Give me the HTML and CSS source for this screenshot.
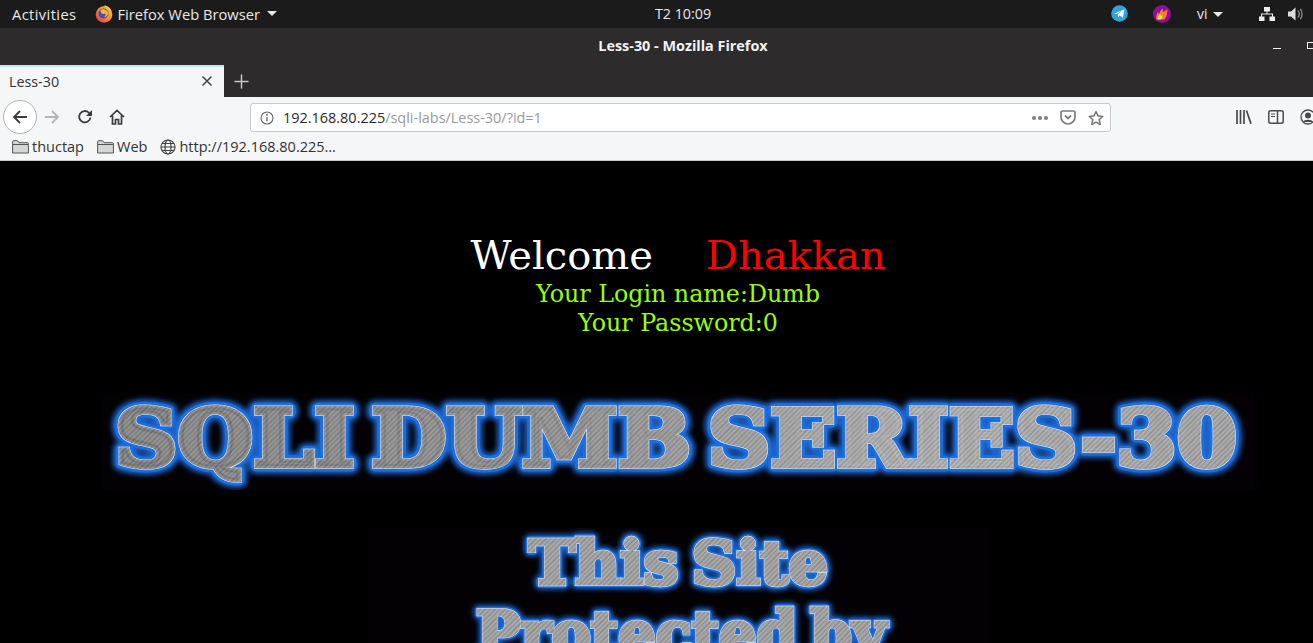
FILE: index.html
```html
<!DOCTYPE html>
<html lang="en">
<head>
    <meta charset="UTF-8">
    <title>Less-30 - Mozilla Firefox</title>
    <link rel="stylesheet" href="styles.css">
</head>
<body>
<div class="desktop">
    <!-- gnome top bar -->
    <div class="topbar">
        <div class="top-left">
            <span class="activities">Activities</span>
            <span class="app-menu">
                <svg class="fx-logo" width="18" height="18" viewBox="0 0 18 18">
                    <defs><linearGradient id="fx" x1="1" y1="0" x2="0" y2="1"><stop offset="0" stop-color="#ffdc2e"/><stop offset=".5" stop-color="#ff8a1c"/><stop offset="1" stop-color="#e0245e"/></linearGradient></defs>
                    <circle cx="9" cy="9.500" r="8.300" fill="url(#fx)"/>
                    <circle cx="8.500" cy="8.500" r="5" fill="#3b4fc4"/>
                    <path d="M5.500 5c3-1.800 7.500 0 7.500 3.500 0 2-1.800 3.600-4.300 3.400 2.200-.7 2.600-2.700.8-3.500-1 1.200-3 .6-3.500-.8z" fill="#ffb52b"/>
                    <path d="M9 .5c3.500 0 7 2.500 8 7-1.500-2.500-3.500-4-6-4.500z" fill="#ffc42a"/>
                </svg>
                <span>Firefox Web Browser</span>
                <i class="caret"></i>
            </span>
        </div>
        <div class="clock">T2 10:09</div>
        <div class="top-right">
            <svg width="17" height="17" viewBox="0 0 17 17">
                <circle cx="8.500" cy="8.500" r="8.300" fill="#2fa3de"/>
                <path d="M3 8.800 13.500 4.300l-1.600 8.500-3.200-2.300-1.600 1.700-.4-2.800 4.600-4-5.700 3.500z" fill="#fff"/>
            </svg>
            <svg class="flame" width="18" height="18" viewBox="0 0 18 18">
                <circle cx="9" cy="9" r="9" fill="#8e0f9e"/>
                <path d="M3.500 14.500c-1-3 .5-5 1.500-7.500.5 1 .8 1.500 1.300 2 .5-2.300 1.500-4 3.500-5.500-.2 1.800.2 3 1 3.800.7-1.200 2-2.400 3.700-2.800-.5 3.500-.3 7-3.300 10z" fill="#ff7a2a"/>
                <path d="M4.500 14.500c-.3-2.500 1.500-3.800 2.500-6 .6 1.200 1.300 2 2.300 2.300.2 1.500-.5 2.800-1.500 3.700z" fill="#ffe14a"/>
            </svg>
            <span class="lang">vi <i class="caret"></i></span>
            <svg class="net" width="16" height="14" viewBox="0 0 16 14" fill="#eee">
                <rect x="5" y="0" width="6" height="4.500"/>
                <rect x="0" y="9.500" width="5.500" height="4.500"/>
                <rect x="10.500" y="9.500" width="5.500" height="4.500"/>
                <path d="M7.500 4h1v2.500H14V10h-1V7.500H3V10H2V6.500h5.500z"/>
            </svg>
            <svg width="15" height="14" viewBox="0 0 15 14">
                <path d="M0 4.500h3L7.500 .5v13L3 9.500H0z" fill="#ddd"/>
                <path d="M10 3.500c1.500 2 1.500 5 0 7M12.300 1.800c2.300 3 2.300 7.400 0 10.400" fill="none" stroke="#999" stroke-width="1.200"/>
            </svg>
        </div>
    </div>

    <!-- window title -->
    <div class="titlebar">
        <div></div>
        <div class="title">Less-30 - Mozilla Firefox</div>
        <div class="win-buttons">
            <i class="win-min"></i>
            <i class="win-max"></i>
        </div>
    </div>

    <!-- tabs -->
    <div class="tabbar">
        <div class="tab">
            <span>Less-30</span>
            <svg width="12" height="12" viewBox="0 0 12 12"><path d="M1.500 1.500l9 9M10.500 1.500l-9 9" stroke="#444" stroke-width="1.500"/></svg>
        </div>
        <svg class="new-tab" width="15" height="15" viewBox="0 0 15 15"><path d="M7.500 .5v14M.5 7.500h14" stroke="#c8c8c8" stroke-width="1.500"/></svg>
    </div>

    <!-- navigation -->
    <div class="toolbar">
        <div class="nav-buttons">
            <span class="back">
                <svg width="16" height="16" viewBox="0 0 16 16"><path d="M15 8H2M8 2 2 8l6 6" fill="none" stroke="#3c3c3c" stroke-width="1.800"/></svg>
            </span>
            <svg class="forward" width="16" height="16" viewBox="0 0 16 16"><path d="M1 8h13M8 2l6 6-6 6" fill="none" stroke="#b4b4b6" stroke-width="1.800"/></svg>
            <svg class="reload" width="16" height="16" viewBox="0 0 16 16"><path d="M13.500 8.500A5.700 5.700 0 1 1 11.800 3.600L14 6" fill="none" stroke="#3c3c3c" stroke-width="1.800"/><path d="M15 1v6H9z" fill="#3c3c3c"/></svg>
            <svg class="home" width="16" height="16" viewBox="0 0 16 16"><path d="M1 8l7-6.500L15 8M3.500 6.500V15h3v-4.500h3V15h3V6.500" fill="none" stroke="#3c3c3c" stroke-width="1.700"/></svg>
        </div>
        <div class="urlbar">
            <svg class="info" width="14" height="14" viewBox="0 0 14 14"><circle cx="7" cy="7" r="6" fill="none" stroke="#666" stroke-width="1.100"/><path d="M7 6v4.500" stroke="#666" stroke-width="1.300"/><circle cx="7" cy="3.900" r=".9" fill="#666"/></svg>
            <span class="url"><b>192.168.80.225</b>/sqli-labs/Less-30/?id=1</span>
            <span class="dots"><i></i><i></i><i></i></span>
            <svg class="pocket" width="16" height="15" viewBox="0 0 16 15"><path d="M1 2.200C1 1.500 1.500 1 2.200 1h11.600c.7 0 1.200.5 1.200 1.200V7a7 7 0 0 1-14 0z" fill="none" stroke="#7c7c7e" stroke-width="1.700"/><path d="M5 5.500 8 8.500l3-3" fill="none" stroke="#7c7c7e" stroke-width="1.800"/></svg>
            <svg class="star" width="16" height="16" viewBox="0 0 16 16"><path d="M8 1.500l2 4.400 4.700.6-3.500 3.200 1 4.800L8 12.100l-4.200 2.400 1-4.800L1.300 6.500 6 5.900z" fill="none" stroke="#7c7c7e" stroke-width="1.600" stroke-linejoin="round"/></svg>
        </div>
        <div class="side-buttons">
            <svg width="16" height="14" viewBox="0 0 16 14"><path d="M1 0v14M4.500 0v14M8 0v14M10.500 .5l4.500 13.300" stroke="#4a4a4a" stroke-width="1.700" fill="none"/></svg>
            <svg width="16" height="14" viewBox="0 0 16 14"><rect x=".8" y=".8" width="14.400" height="12.400" rx="2" fill="none" stroke="#4a4a4a" stroke-width="1.500"/><path d="M9.500 1v12" stroke="#4a4a4a" stroke-width="1.500"/><path d="M3 4h4M3 6.500h4" stroke="#4a4a4a"/></svg>
            <svg width="16" height="16" viewBox="0 0 16 16"><circle cx="8" cy="8" r="7" fill="none" stroke="#4a4a4a" stroke-width="1.300"/><circle cx="8" cy="6.500" r="3" fill="#4a4a4a"/><path d="M3 13c1-3 9-3 10 0z" fill="#4a4a4a"/></svg>
        </div>
    </div>

    <!-- bookmarks -->
    <div class="bookmarks">
        <span class="bm">
            <svg width="17" height="14" viewBox="0 0 17 14"><path d="M.6 13V1.600c0-.5.400-.9.900-.9h4l1.500 2h8.500c.5 0 .9.400.9.900V13z" fill="#d6d6d6" stroke="#555" stroke-width="1"/><path d="M1 4.500h15" stroke="#555"/></svg>
            thuctap
        </span>
        <span class="bm">
            <svg width="17" height="14" viewBox="0 0 17 14"><path d="M.6 13V1.600c0-.5.400-.9.900-.9h4l1.500 2h8.500c.5 0 .9.400.9.900V13z" fill="#d6d6d6" stroke="#555" stroke-width="1"/><path d="M1 4.500h15" stroke="#555"/></svg>
            Web
        </span>
        <span class="bm">
            <svg width="16" height="16" viewBox="0 0 16 16" fill="none" stroke="#444" stroke-width="1.200"><circle cx="8" cy="8" r="7"/><ellipse cx="8" cy="8" rx="3" ry="7"/><path d="M1 8h14M2 4.500h12M2 11.500h12"/></svg>
            http://192.168.80.225…
        </span>
    </div>

    <!-- page -->
    <div class="page">
        <div class="welcome"><span>Welcome</span><span class="name">Dhakkan</span></div>
        <div class="login">Your Login name:Dumb</div>
        <div class="login">Your Password:0</div>

        <svg class="banner" width="1154" height="97" viewBox="0 0 1154 97">
            <defs>
                <pattern id="brushed" width="7" height="7" patternUnits="userSpaceOnUse" patternTransform="rotate(-45)">
                    <rect width="7" height="7" fill="#a0a0a0"/>
                    <rect y="0" width="7" height="1" fill="#888"/>
                    <rect y="2" width="7" height="1" fill="#b2b2b2"/>
                    <rect y="3" width="7" height="1" fill="#8e8e8e"/>
                    <rect y="5" width="7" height="1" fill="#aaa"/>
                </pattern>
                <linearGradient id="sheen" x1="0" y1="0" x2="1" y2="0">
                    <stop offset="0" stop-color="#000" stop-opacity=".14"/>
                    <stop offset=".35" stop-color="#000" stop-opacity=".08"/>
                    <stop offset=".7" stop-color="#fff" stop-opacity=".1"/>
                    <stop offset="1" stop-color="#fff" stop-opacity=".02"/>
                </linearGradient>
                <filter id="soft" x="-5%" y="-30%" width="110%" height="160%">
                    <feGaussianBlur stdDeviation="2.500"/>
                </filter>
            </defs>
            <use href="#big-text" class="layer-glow"/>
            <use href="#big-text" class="layer-blue"/>
            <g class="layer-line">
                <text id="big-text" class="logo-big" x="14" y="73" textLength="1122" lengthAdjust="spacingAndGlyphs">SQLI DUMB SERIES-30</text>
            </g>
            <use href="#big-text" class="layer-metal"/>
            <use href="#big-text" class="layer-sheen"/>
        </svg>

        <svg class="banner banner-small" width="620" height="150" viewBox="0 0 620 150">
            <use href="#site-text" class="layer-glow thin"/>
            <use href="#site-text" class="layer-blue thin"/>
            <use href="#by-text" class="layer-glow thin"/>
            <use href="#by-text" class="layer-blue thin"/>
            <g class="layer-line thin">
                <text id="site-text" class="logo-small" x="161" y="56" textLength="299" lengthAdjust="spacingAndGlyphs">This Site</text>
                <text id="by-text" class="logo-small" x="108" y="126" textLength="410" lengthAdjust="spacingAndGlyphs">Protected by</text>
            </g>
            <use href="#site-text" class="layer-metal thin"/>
            <use href="#by-text" class="layer-metal thin"/>
        </svg>
    </div>
</div>
</body>
</html>
```

FILE: styles.css
```css
html, body {
    margin: 0;
    height: 643px;
    overflow: hidden;
    background: #000;
}

/* the real screen is wider than the shot, so it runs off the right edge */
.desktop {
    width: 1366px;
    height: 643px;
    overflow: hidden;
    font-family: "Open Sans", "Noto Sans", sans-serif;
}

svg {
    display: block;
    flex: none;
}

/* Top bar */
.topbar {
    height: 28px;
    box-sizing: border-box;
    padding-bottom: 1px;
    display: grid;
    grid-template-columns: 1fr auto 1fr;
    align-items: center;
    background: #1b1b1b;
    color: #e8e8e8;
    font-size: 14.700px;
}

.top-left {
    display: flex;
    align-items: center;
    gap: 18px;
    padding-left: 12px;
}

.activities {
    letter-spacing: .4px;
}

.app-menu {
    display: flex;
    align-items: center;
    gap: 5px;
}

.clock {
    font-size: 14.300px;
}

.caret {
    display: inline-block;
    width: 0;
    height: 0;
    margin-left: 2px;
    border-left: 5px solid transparent;
    border-right: 5px solid transparent;
    border-top: 5px solid #e8e8e8;
    vertical-align: 2px;
}

.top-right {
    display: flex;
    align-items: center;
    justify-content: flex-end;
    padding-right: 63px;
}

.flame {
    margin-left: 25px;
}

.lang {
    margin-left: 26px;
    width: 36px;
    font-size: 14px;
}

.net {
    margin-left: 26px;
    margin-right: 13px;
}

/* Title bar */
.titlebar {
    height: 37px;
    box-sizing: border-box;
    padding-bottom: 2px;
    display: grid;
    grid-template-columns: 1fr auto 1fr;
    align-items: center;
    background: #2d2b2c;
}

.title {
    color: #f2f2f2;
    font-size: 14.400px;
    font-weight: 700;
}

.win-buttons {
    display: flex;
    align-items: center;
    justify-content: flex-end;
    gap: 26px;
    padding-right: 51px;
}

.win-min {
    width: 8px;
    height: 1px;
    margin-top: 6px;
    background: #f0f0f0;
}

.win-max {
    width: 6px;
    height: 5px;
    border: 1px solid #f0f0f0;
}

/* Tabs */
.tabbar {
    height: 32px;
    display: flex;
    align-items: center;
    background: #2d2b2c;
}

.tab {
    width: 224px;
    height: 32px;
    box-sizing: border-box;
    display: flex;
    align-items: center;
    justify-content: space-between;
    padding: 0 11px 2px 9px;
    background: #f5f6f7;
    border-top: 2px solid #c1e9fb;
    color: #333;
    font-size: 14.300px;
}

.new-tab {
    margin-left: 10px;
}

/* Nav toolbar */
.toolbar {
    height: 38px;
    box-sizing: border-box;
    padding-top: 2px;
    display: flex;
    align-items: center;
    background: #f5f6f7;
}

.nav-buttons {
    width: 250px;
    display: flex;
    align-items: center;
    padding-left: 3px;
    box-sizing: border-box;
}

.back {
    width: 32px;
    height: 32px;
    display: flex;
    align-items: center;
    justify-content: center;
    border: 1px solid #b5b5b5;
    border-radius: 50%;
    background: #fff;
}

.forward {
    margin-left: 7px;
}

.reload {
    margin-left: 17px;
}

.home {
    margin-left: 16px;
}

.urlbar {
    width: 861px;
    height: 29px;
    margin-top: 1px;
    box-sizing: border-box;
    display: flex;
    align-items: center;
    padding: 0 6px 0 9px;
    background: #fff;
    border: 1px solid #c9c9cb;
    border-radius: 3px;
}

.url {
    flex: 1;
    margin-left: 9px;
    color: #9a9a9c;
    font-size: 14.450px;
}

.url b {
    color: #2a2a2a;
    font-weight: 400;
}

.dots {
    display: flex;
    gap: 2px;
}

.dots i {
    width: 4px;
    height: 4px;
    border-radius: 50%;
    background: #7c7c7e;
}

.pocket {
    margin-left: 12px;
}

.star {
    margin-left: 12px;
}

.side-buttons {
    display: flex;
    align-items: center;
    gap: 16px;
    margin-left: 125px;
}

/* Bookmarks */
.bookmarks {
    height: 26px;
    box-sizing: border-box;
    display: flex;
    align-items: center;
    gap: 13px;
    padding: 0 0 2px 12px;
    background: #f5f6f7;
    border-bottom: 1px solid #c8c8ca;
    color: #333;
    font-size: 14.500px;
}

.bm {
    display: flex;
    align-items: center;
    gap: 3px;
}

/* Page content, 1356 wide because of the scrollbar */
.page {
    width: 1356px;
    padding-top: 70px;
    background: #000;
    font-family: "DejaVu Serif", serif;
    text-align: center;
}

.welcome {
    color: #fff;
    font-size: 40px;
    line-height: 49px;
}

.name {
    margin-left: 53px;
    color: #f00;
}

.login {
    color: #9f0;
    font-size: 23.750px;
    line-height: 29px;
}

/* Banners */
.banner {
    margin: 55px auto 0;
    background: #030104;
}

.banner-small {
    margin-top: 38px;
}

.logo-big {
    font-size: 78px;
    font-weight: 700;
    word-spacing: -12px;
}

.logo-small {
    font-size: 60px;
    font-weight: 700;
    word-spacing: -8px;
}

.layer-glow {
    fill: #1a62c8;
    stroke: #1a62c8;
    stroke-width: 16px;
    stroke-linejoin: round;
    filter: url(#soft);
}

.layer-blue {
    fill: #1c6fe0;
    stroke: #1c6fe0;
    stroke-width: 11px;
    stroke-linejoin: round;
}

.layer-metal {
    fill: url(#brushed);
    stroke: url(#brushed);
    stroke-width: 4.500px;
}

.layer-sheen {
    fill: url(#sheen);
    stroke: url(#sheen);
    stroke-width: 4.500px;
}

/* a hair wider than the metal, so only its edge shows */
.layer-line {
    fill: none;
    stroke: #eef2fb;
    stroke-width: 5.500px;
}

.layer-glow.thin {
    stroke-width: 11px;
}

.layer-blue.thin {
    stroke-width: 7.500px;
}

.layer-metal.thin {
    stroke-width: 3.500px;
}

.layer-line.thin {
    stroke-width: 4.300px;
}
```
